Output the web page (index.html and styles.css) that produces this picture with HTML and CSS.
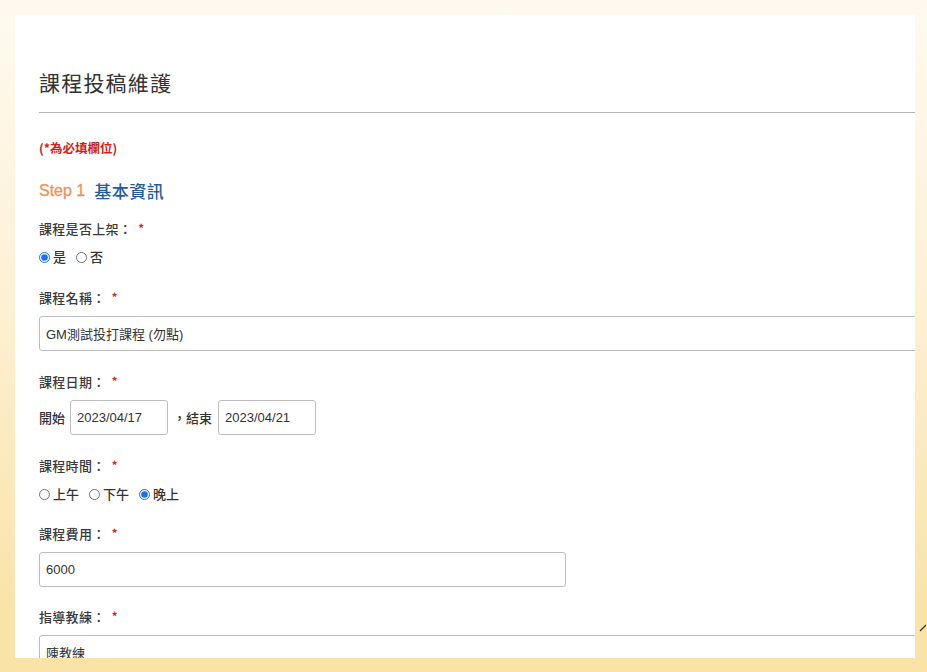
FILE: index.html
```html
<!DOCTYPE html>
<html lang="zh-Hant">
<head>
<meta charset="utf-8">
<title>課程投稿維護</title>
<link rel="stylesheet" href="styles.css">
</head>
<body>
<div class="panel">
  <div class="content">
    <h1 class="title">課程投稿維護</h1>
    <div class="rule"></div>
    <p class="required-note">(*為必填欄位)</p>
    <h2 class="step"><span class="step-no">Step 1</span><span class="step-name">基本資訊</span></h2>

    <div class="field">
      <div class="label">課程是否上架：<span class="star">*</span></div>
      <div class="radios">
        <label class="radio"><input type="radio" name="pub" checked><span>是</span></label>
        <label class="radio"><input type="radio" name="pub"><span>否</span></label>
      </div>
    </div>

    <div class="field">
      <div class="label">課程名稱：<span class="star">*</span></div>
      <input class="text wide" type="text" value="GM測試投打課程 (勿點)">
    </div>

    <div class="field">
      <div class="label">課程日期：<span class="star">*</span></div>
      <div class="date-row">
        <span class="date-text">開始</span>
        <input class="text date" type="text" value="2023/04/17">
        <span class="date-text sep">，結束</span>
        <input class="text date" type="text" value="2023/04/21">
      </div>
    </div>

    <div class="field">
      <div class="label">課程時間：<span class="star">*</span></div>
      <div class="radios">
        <label class="radio"><input type="radio" name="time"><span>上午</span></label>
        <label class="radio"><input type="radio" name="time"><span>下午</span></label>
        <label class="radio"><input type="radio" name="time" checked><span>晚上</span></label>
      </div>
    </div>

    <div class="field tight">
      <div class="label">課程費用：<span class="star">*</span></div>
      <input class="text fee" type="text" value="6000">
    </div>

    <div class="field tight">
      <div class="label">指導教練：<span class="star">*</span></div>
      <input class="text wide" type="text" value="陳教練">
    </div>
  </div>
</div>
<svg class="grip" width="8" height="8" viewBox="0 0 8 8"><path d="M1 7 L7 1" stroke="#333" stroke-width="1.2"/></svg>
</body>
</html>
```
FILE: styles.css
```css
html, body {
  margin: 0;
  padding: 0;
}
body {
  width: 927px;
  height: 672px;
  overflow: hidden;
  position: relative;
  background: linear-gradient(180deg, #fffaf0 0%, #fdf1d4 45%, #f9e3a8 90%, #f9e3a6 100%);
  font-family: "Noto Sans CJK TC", "Liberation Sans", sans-serif;
  color: #333;
}
.panel {
  margin: 15px 0 0 15px;
  width: 900px;
  height: 643px;
  background: #fff;
  overflow: hidden;
  box-sizing: border-box;
  padding: 53px 0 0 24px;
}
.content {
  width: 900px;
}
.title {
  margin: 0;
  font-size: 21px;
  font-weight: 400;
  line-height: 28px;
  color: #333;
  letter-spacing: 1.2px;
}
.rule {
  margin-top: 16px;
  border-top: 1.5px solid #b5b5b5;
}
.required-note {
  margin: 26px 0 0;
  font-size: 12.5px;
  line-height: 18px;
  font-weight: 700;
  color: #cc1f1f;
}
.step {
  margin: 23px 0 0;
  height: 22px;
  font-size: 17px;
  line-height: 22px;
  font-weight: 500;
  display: flex;
  align-items: center;
  gap: 9px;
}
.step-no {
  color: #ef9258;
  font-family: "Liberation Sans", sans-serif;
  font-size: 16px;
  font-weight: 400;
  -webkit-text-stroke: 0.3px #ef9258;
}
.step-name {
  color: #1f5e9e;
  letter-spacing: 0.5px;
}
.field {
  margin-top: 17px;
  display: flex;
  flex-direction: column;
  gap: 8px;
}
.field + .field {
  margin-top: 21px;
}
.field.tight {
  margin-top: 20px;
}
.label {
  font-size: 13px;
  line-height: 20px;
  font-weight: 500;
  color: #3a3a3a;
  letter-spacing: 0.3px;
}
.star {
  color: #d02020;
  margin-left: 6px;
}
.radios {
  display: flex;
  gap: 10px;
  height: 20px;
  align-items: center;
}
.radio {
  display: flex;
  align-items: center;
  gap: 3px;
  font-size: 13px;
  font-weight: 500;
  line-height: 20px;
  color: #333;
}
.radio input {
  margin: 0;
  width: 11px;
  height: 11px;
  accent-color: #1a73e8;
}
.text {
  box-sizing: border-box;
  height: 35px;
  border: 1px solid #bdbdbd;
  border-radius: 3px;
  padding: 0 6px;
  font-family: "Liberation Sans", "Noto Sans CJK TC", sans-serif;
  font-size: 13px;
  color: #333;
  background: #fff;
  outline: none;
}
.wide {
  width: 900px;
}
.fee {
  width: 527px;
}
.date-row {
  display: flex;
  align-items: center;
}
.date-text {
  font-size: 13px;
  font-weight: 500;
  color: #333;
  margin-right: 5px;
}
.sep {
  margin-left: 5px;
  margin-right: 6px;
}
.date {
  width: 98px;
}
.grip {
  position: absolute;
  left: 919px;
  top: 624px;
}
```
